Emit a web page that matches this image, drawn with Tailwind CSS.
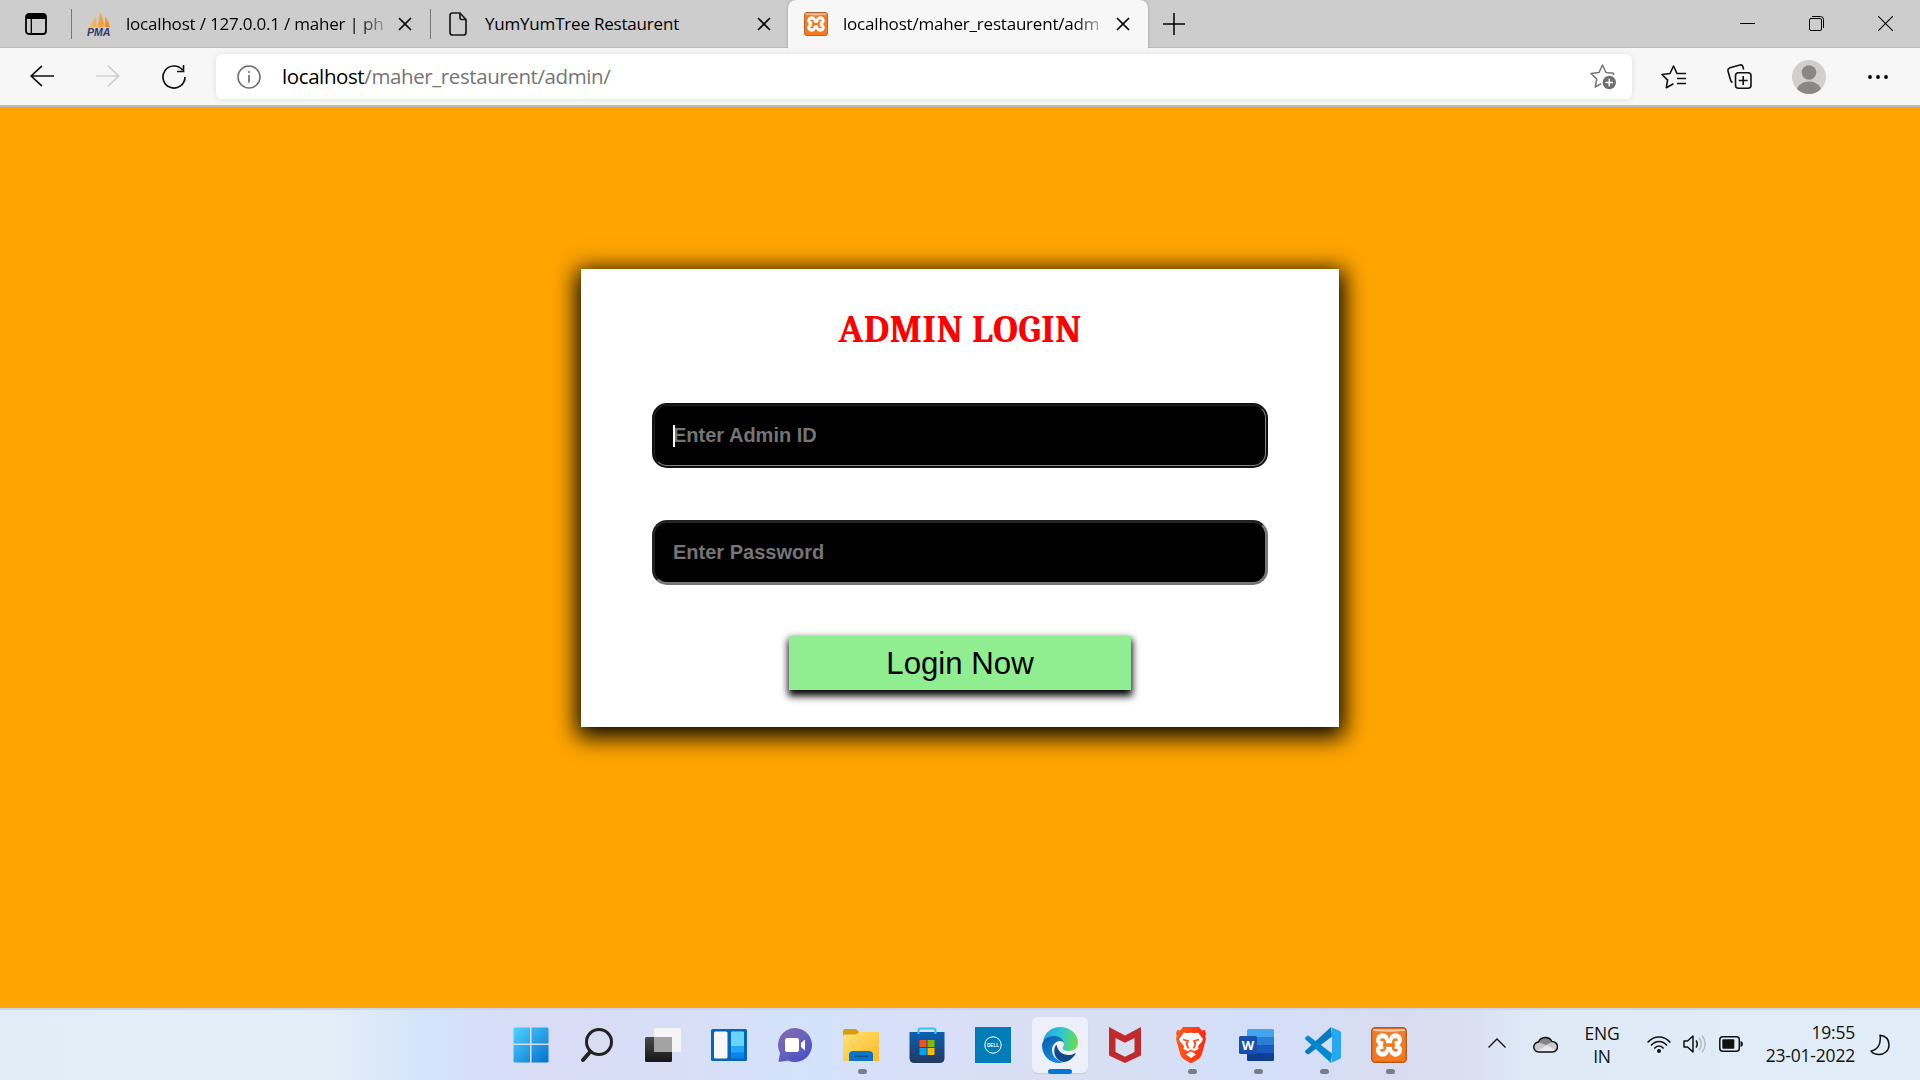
<!DOCTYPE html>
<html lang="en">
<head>
<meta charset="utf-8">
<title>Admin Login</title>
<script src="https://cdn.jsdelivr.net/npm/@tailwindcss/browser@4"></script>
</head>
<body class="w-[1920px] h-[1080px] overflow-hidden flex flex-col font-['Open_Sans',sans-serif] text-black">

<svg class="absolute w-0 h-0">
  <defs>
    <linearGradient id="xo" x1="0" y1="0" x2="0" y2="1"><stop offset="0" stop-color="#e8803c"/><stop offset=".3" stop-color="#f47a20"/><stop offset="1" stop-color="#f5791f"/></linearGradient>
    <symbol id="xampp" viewBox="0 0 36 36">
      <rect x=".7" y=".7" width="34.6" height="34.6" rx="3.5" fill="url(#xo)" stroke="#b55a1c" stroke-width="1.4"/>
      <path d="M2 2.2h32v1.600q-16 2-32 0z" fill="#f9c7a0"/>
      <g fill="#fff"><circle cx="11.500" cy="12.800" r="6.500"/><circle cx="24.500" cy="12.800" r="6.500"/><circle cx="11.500" cy="23.200" r="6.500"/><circle cx="24.500" cy="23.200" r="6.500"/><path d="M8 13h20v10H8z"/></g>
      <path d="M10.500 12.800q2.800-.8 3.200 1.700 .3 1.500-.5 3.500 .8 2 .5 3.500-.4 2.500-3.200 1.700M25.500 12.800q-2.800-.8-3.200 1.700-.3 1.500 .5 3.500-.8 2-.5 3.500 .4 2.500 3.200 1.700" fill="none" stroke="#f47a20" stroke-width="2.600" stroke-linecap="round"/>
      <path d="M13 16.200h10v3.600H13z" fill="#f47a20"/>
    </symbol>
    <symbol id="x" viewBox="0 0 14 14"><path d="M1 1l12 12M13 1L1 13" stroke="currentColor" stroke-width="1.700" fill="none"/></symbol>
  </defs>
</svg>

<!-- Tab strip -->
<header class="h-12 shrink-0 bg-[#cdcdcd] flex items-center border-b border-[#bdbdbd] text-[17px] tracking-[-0.2px] whitespace-nowrap">
  <div class="w-[71px] pl-[25px]">
    <svg class="w-[22px] h-[22px]" viewBox="0 0 22 22"><rect x="1" y="1" width="20" height="20" rx="3" fill="none" stroke="#000" stroke-width="1.800"/><path d="M1 6V4q0-3 3-3h14q3 0 3 3v2z"/><path d="M6.300 6v15" stroke="#000" stroke-width="1.300"/></svg>
  </div>
  <div class="w-[359px] h-[30px] border-l border-[#777] flex items-center pl-[15px]">
    <svg class="w-6 h-6 shrink-0" viewBox="0 0 24 24"><defs><linearGradient id="pm" x1="0" y1="0" x2="1" y2="0"><stop offset="0" stop-color="#fbc16c"/><stop offset="1" stop-color="#f88a10"/></linearGradient></defs><path d="M1 15.500Q7 10 8 4q2 6 1 11zM9.500 15Q13 8 12.500 0q5 7 4 15zM17.500 15Q19 9 18 4q4 6 5 11.500z" fill="url(#pm)"/><text x="0" y="23.500" font-family="Liberation Sans" font-size="10" font-weight="700" font-style="italic" fill="#333a6b" textLength="23.500" lengthAdjust="spacingAndGlyphs" letter-spacing="0">PMA</text></svg>
    <div class="ml-[15px] w-[263px] mask-r-from-[232px] mask-r-to-[266px]">localhost / 127.0.0.1 / maher | ph</div>
    <svg class="w-[14px] h-[14px] ml-[9px]"><use href="#x"/></svg>
  </div>
  <div class="w-[358px] h-[30px] border-l border-[#777] flex items-center pl-[18px]">
    <svg class="w-[18px] h-6" viewBox="0 0 18 24"><path d="M3.500 1h7.500l6 6.500V20.500q0 2.500-2.500 2.500h-11Q1 23 1 20.500v-17Q1 1 3.500 1zM11 1v5q0 1.500 1.500 1.500H17" fill="none" stroke="#1a1a1a" stroke-width="1.700"/></svg>
    <div class="ml-[18px] w-[272px]">YumYumTree Restaurent</div>
    <svg class="w-[14px] h-[14px]"><use href="#x"/></svg>
  </div>
  <div class="relative w-[360px] h-[49px] self-start bg-[#f7f7f7] rounded-t-lg shadow-[0_0_3px_rgba(0,0,0,0.25)] [clip-path:inset(-4px_-4px_0_-4px)] flex items-center pl-4 pb-[2px]">
    <svg class="w-6 h-6"><use href="#xampp"/></svg>
    <div class="ml-[15px] w-[260px] mask-r-from-[232px] mask-r-to-[266px]">localhost/maher_restaurent/adm</div>
    <svg class="w-[14px] h-[14px] ml-[13px]"><use href="#x"/></svg>
  </div>
  <svg class="w-[22px] h-[22px] ml-[15px]" viewBox="0 0 22 22"><path d="M11 0v22M0 11h22" stroke="#000" stroke-width="1.500"/></svg>
  <div class="ml-auto flex items-center gap-[54px] pr-[27px]">
    <svg class="w-[15px] h-[15px]"><path d="M0 7.500h15" stroke="#000"/></svg>
    <svg class="w-[15px] h-[15px]" viewBox="0 0 15 15" fill="none" stroke="#000"><rect x=".5" y="2.500" width="12" height="12" rx="1.500"/><path d="M3 .5h8.500q3 0 3 3V12"/></svg>
    <svg class="w-[15px] h-[15px]"><path d="M0 0l15 15M15 0L0 15" stroke="#000" stroke-width="1.100"/></svg>
  </div>
</header>

<!-- Toolbar -->
<nav class="h-[59px] shrink-0 bg-[#f7f7f7] border-b-2 border-[#bbb] flex items-center pl-[30px]">
  <svg class="w-6 h-[22px] -mt-[2px]" viewBox="0 0 24 22" fill="none" stroke="#111" stroke-width="1.700"><path d="M24 11H1M12 .8L1.200 11 12 21.200"/></svg>
  <svg class="w-6 h-[22px] ml-[42px] -mt-[2px]" viewBox="0 0 24 22" fill="none" stroke="#cfcfcf" stroke-width="1.700"><path d="M0 11h23M12 .8L22.800 11 12 21.200"/></svg>
  <svg class="w-6 h-6 ml-[42px]" viewBox="0 0 24 24" fill="none" stroke="#111" stroke-width="1.700"><path d="M23 12A11 11 0 1 1 20.500 5M21.500 0v6.500H15"/></svg>
  <div class="ml-[30px] w-[1416px] h-[45px] rounded-md bg-white shadow-[0_0_6px_rgba(0,0,0,0.1)] flex items-center pl-[21px] pr-[15px]">
    <svg class="w-6 h-6" viewBox="0 0 24 24" fill="none" stroke="#6b6b6b" stroke-width="1.500"><circle cx="12" cy="12" r="11"/><path d="M12 10v7.500" stroke-width="1.700"/><circle cx="12" cy="7" r="1" fill="#6b6b6b" stroke="none"/></svg>
    <div class="ml-[21px] text-[20.5px] tracking-[-0.4px] text-[#757575]"><span class="text-black">localhost</span>/maher_restaurent/admin/</div>
    <svg class="w-[27px] h-[26px] ml-auto" viewBox="0 0 27 26"><path d="M23.500 11v-1.800L16 8.500 12.500 1 9 8.500 1 9.500l5.800 5.600L5.200 23l6-3.300" fill="none" stroke="#777" stroke-width="1.500" stroke-linejoin="round"/><circle cx="19.300" cy="18.500" r="6.700" fill="#6f6f6f"/><path d="M19.300 14.700v7.600M15.500 18.500h7.600" stroke="#fff" stroke-width="1.500"/></svg>
  </div>
  <svg class="w-[25px] h-[24px] ml-[29px]" viewBox="0 0 25 24" fill="none" stroke="#111" stroke-width="1.600" stroke-linejoin="round"><path d="M25 8.500h-9L12.500 1 9 8.500 1 9.500l5.600 5.600L5.300 22.700l7.200-4M16 13.500h9M16 18.500h9"/></svg>
  <svg class="w-[25px] h-[25px] ml-[41px]" viewBox="0 0 25 25" fill="none" stroke="#111" stroke-width="1.600"><rect x="8.500" y="8.800" width="15.500" height="15.400" rx="3"/><path d="M16.200 12v9M11.700 16.500h9M5.500 18.500Q4 18 3.500 16L1 7q-.5-2.500 2-3.200L13 1q2.500-.5 3 2l.6 2.500"/></svg>
  <svg class="w-[34px] h-[34px] ml-[40px]" viewBox="0 0 34 34"><defs><clipPath id="av"><circle cx="17" cy="17" r="17"/></clipPath></defs><g clip-path="url(#av)"><rect width="34" height="34" fill="#d2d0ce"/><circle cx="17" cy="12.500" r="7.300" fill="#8a8886"/><ellipse cx="17" cy="32" rx="12.500" ry="10.500" fill="#8a8886"/></g></svg>
  <svg class="w-5 h-1 ml-[42px]" viewBox="0 0 20 4"><circle cx="2" cy="2" r="1.900"/><circle cx="10" cy="2" r="1.900"/><circle cx="18" cy="2" r="1.900"/></svg>
</nav>

<!-- Page -->
<main class="flex-1 bg-[#ffa500] flex justify-center items-start pt-[162px]">
  <form class="w-[758px] h-[458px] bg-white shadow-[0_5px_22px_4.5px_#000] flex flex-col items-center pt-[37px]">
    <h1 class="font-[Cambria,Caladea,serif] font-bold text-[38.5px] leading-[48px] tracking-[0.3px] text-[red]">ADMIN LOGIN</h1>
    <div class="relative mt-[49px] w-[616px] h-[65px] rounded-[15px] border-2 border-[#101010] bg-black">
      <input class="w-full h-full rounded-[13px] border border-t-[#222] border-l-[#222] border-r-[#858585] border-b-[#858585] bg-black pl-[18px] text-[20px] font-bold font-['Liberation_Sans',Arial,sans-serif] text-white placeholder:text-[#757575] outline-none" placeholder="Enter Admin ID">
      <span class="absolute left-[19px] top-[20px] w-[2px] h-[22px] bg-white"></span>
    </div>
    <input type="password" class="mt-[52px] w-[616px] h-[65px] rounded-[15px] border-[3px] border-t-[#222] border-l-[#222] border-r-[#767676] border-b-[#767676] bg-black pl-[18px] text-[20px] font-bold font-['Liberation_Sans',Arial,sans-serif] text-white placeholder:text-[#757575]" placeholder="Enter Password">
    <button type="button" class="mt-[51px] w-[342px] h-[54px] bg-[#90ee90] shadow-[0_4.5px_7.5px_1.5px_#000] text-[31.2px] leading-[53px] font-['Liberation_Sans',Arial,sans-serif]">Login Now</button>
  </form>
</main>

<!-- Taskbar -->
<footer class="h-[72px] shrink-0 border-t-2 border-[#cbd6e8] bg-[linear-gradient(90deg,#e1edf7_0,#e3eef8_330px,#d4e3fb_430px,#d8dcf5_530px,#d8dff7_700px,#d3e3fa_800px,#d8e0f8_900px,#d9dff2_1100px,#d3dffa_1250px,#d8dcf0_1400px,#dadff1_1470px,#dfeaf7_1530px,#e1edf9_1920px)] flex items-center">
  <div class="ml-[498px] flex h-full [&>div]:relative [&>div]:w-[66px] [&>div]:h-full [&>div]:flex [&>div]:items-center [&>div]:justify-center">
    <div><svg class="w-9 h-9" viewBox="0 0 36 36"><defs><linearGradient id="wn" x1="0" y1="0" x2="1" y2="1"><stop offset="0" stop-color="#4fd4ff"/><stop offset="1" stop-color="#0470cc"/></linearGradient></defs><path d="M2 .5h15v16H.5V2Q.5 .5 2 .5zM18.500 .5h15.500q1.500 0 1.500 1.500v14.500h-17zM.5 18H17v17.500H2Q.5 35.500 .5 34zM18.500 18h17v16q0 1.500-1.500 1.500H18.500z" fill="url(#wn)"/></svg></div>
    <div><svg class="w-9 h-9" viewBox="0 0 36 36" fill="none" stroke="#222"><circle cx="20" cy="15" r="12.500" stroke-width="3"/><path d="M11.500 24.500L4 33" stroke-width="4" stroke-linecap="round"/></svg></div>
    <div><svg class="w-9 h-9" viewBox="0 0 36 36"><defs><linearGradient id="tv" x1="0" y1="0" x2="0" y2="1"><stop offset="0" stop-color="#4a4a4a"/><stop offset="1" stop-color="#161616"/></linearGradient></defs><rect x="0" y="10" width="27" height="25" rx="1.500" fill="url(#tv)"/><rect x="9" y="1" width="27" height="24" rx="1.500" fill="#f5f5f5"/><path d="M9 10h18v15H10.500Q9 25 9 23.500z" fill="#a3a3a3"/></svg></div>
    <div><svg class="w-9 h-9" viewBox="0 0 36 36"><rect y="2" width="36" height="32" rx="1.500" fill="#0865b8"/><rect x="3" y="4.500" width="13.500" height="27" rx="1.500" fill="#f8f8f8"/><rect x="20" y="4.500" width="13" height="27" rx="1" fill="#0a84ea"/><path d="M20 19V5.500q0-1 1-1h11q1 0 1 1V19z" fill="#66d5ff"/><path d="M20 19h13v6.500H20z" fill="#1fa5fa"/></svg></div>
    <div><svg class="w-9 h-9" viewBox="0 0 36 36"><defs><linearGradient id="ch" x1="0" y1="0" x2=".7" y2="1"><stop offset="0" stop-color="#8d66a8"/><stop offset=".5" stop-color="#6a63bd"/><stop offset="1" stop-color="#4b50c4"/></linearGradient></defs><path d="M18 1a17 17 0 1 1-7 32.500Q5 35 1.500 34.500L3 26A17 17 0 0 1 18 1z" fill="url(#ch)"/><rect x="8" y="11" width="14" height="14" rx="2" fill="#fff"/><path d="M24 16l4-3.500v11L24 20z" fill="#fff"/></svg></div>
    <div><svg class="w-9 h-9" viewBox="0 0 36 36"><defs><linearGradient id="fo" x1="0" y1="0" x2="1" y2="1"><stop offset="0" stop-color="#ffe27a"/><stop offset="1" stop-color="#fcba20"/></linearGradient></defs><path d="M0 4q0-2 2-2h10q2 0 3 2l1 1h20v4H0z" fill="#dc9c0a"/><path d="M0 9q0-1.500 1.500-1.500H12q1.500 0 3-1.500 .8-1 2-1H36v29H0z" fill="url(#fo)"/><path d="M6 34V28q0-4 4-4h16q4 0 4 4v6z" fill="#0b73c8"/><path d="M11 29.300h14" stroke="#064b8a" stroke-width="1.300"/></svg><span class="absolute left-[30px] bottom-[6px] w-[9px] h-[5px] rounded-full bg-[#797d89]"></span></div>
    <div><svg class="w-9 h-9" viewBox="0 0 36 36"><defs><linearGradient id="st" x1="0" y1="0" x2="0" y2="1"><stop offset="0" stop-color="#0a61b4"/><stop offset="1" stop-color="#24385e"/></linearGradient></defs><path d="M.5 5h35v26q0 5-5 5h-25q-5 0-5-5z" fill="url(#st)"/><path d="M9.500 7V3q0-1.500 1.500-1.500h14q1.500 0 1.500 1.500v4" fill="none" stroke="#36c1f0" stroke-width="2"/><path d="M10.500 13h7v7h-7z" fill="#f25022"/><path d="M18.500 13h7v7h-7z" fill="#7fba00"/><path d="M10.500 21h7v7h-7z" fill="#00a4ef"/><path d="M18.500 21h7v7h-7z" fill="#ffb900"/></svg></div>
    <div><svg class="w-9 h-9" viewBox="0 0 36 36"><path d="M0 0h36v36H0z" fill="#007db8"/><circle cx="18" cy="18" r="8.200" fill="none" stroke="#fff"/><text x="12" y="20" textLength="12" lengthAdjust="spacingAndGlyphs" font-family="Liberation Sans" font-size="5.500" font-weight="700" fill="#fff">DELL</text></svg></div>
    <div><span class="absolute left-[6px] top-[7px] w-14 h-14 rounded-md bg-[#edf0fa] shadow-[0_1px_1px_#c5cbdd]"></span>
      <svg class="relative left-px w-9 h-9" viewBox="0 0 36 36"><defs><linearGradient id="e1" x1="0" y1=".3" x2="1" y2=".4"><stop offset="0" stop-color="#259fe4"/><stop offset=".5" stop-color="#2fc5d8"/><stop offset="1" stop-color="#6bdc4c"/></linearGradient><linearGradient id="e2" x1="0" y1="0" x2=".6" y2="1"><stop offset="0" stop-color="#0b5ca8"/><stop offset="1" stop-color="#118be0"/></linearGradient></defs>
      <path d="M1 14C3 5 10 0 18 0c10 0 18 7 18 15 0 6-4 9-9 9-4 0-6.500-1.500-6.500-3 0-1 1.500-1.500 1.500-4 0-3-4-6-9-6-5 0-9 1-12 3z" fill="url(#e1)"/>
      <path d="M0 18C1 12 6 9 12 9c6 0 10 4 10 8 0-2-2-3-4-3-4 0-8 4-8 9 0 6 5 11 11 12-1.500 .8-2 1-4 1C7 36 0 28 0 18z" fill="url(#e2)"/>
      <path d="M14.500 17.500C12 20 11 27 15 31.500c4 4.500 9 4 12 2 3-1.800 5.500-4.500 6.500-6.500 .3-.6-.3-1-1-.6-2 1-4 1.600-6 1.600-6 0-11-4-12-10.500z" fill="#114a8b"/></svg>
      <span class="absolute left-[22px] bottom-[6px] w-6 h-[5px] rounded-full bg-[#0078d7]"></span></div>
    <div><svg class="w-9 h-9" viewBox="0 0 36 36"><path d="M2 0l16 8.500L34 0v28.500L18 36 2 28.500zM8.500 11v14l9.500 4.700L27.500 25V11L18 15.700z" fill="#c12a2c" fill-rule="evenodd"/></svg></div>
    <div><svg class="w-9 h-9" viewBox="0 0 36 36"><defs><linearGradient id="br"><stop offset="0" stop-color="#ff5a1c"/><stop offset="1" stop-color="#ff2a0c"/></linearGradient></defs><path d="M10 0h16l3 3.500 3-.5 1 4-.8 1.500L33 12l-4.500 16q-.8 2.500-3 4L18 36.500 10.500 32q-2.200-1.500-3-4L3 12l.8-3.500L3 7l1-4 3 .5z" fill="url(#br)"/><path d="M11 5.500l4 .8 3-.8 3 .8 4-.8 5 6.500-1 2.500-4 4.500 .5 3-4 2-1.500 1.500 3 2L18 31l-5-3.500 3-2-1.500-1.500-4-2 .5-3-4-4.500L6 12z" fill="#fff"/><path d="M10 12.500l5 1.500-1.500 3 2 4.500M26 12.500l-5 1.500 1.500 3-2 4.500M15 25l3-1.500 3 1.500" stroke="#fb4a1c" stroke-width="1.800" fill="none"/></svg><span class="absolute left-[30px] bottom-[6px] w-[9px] h-[5px] rounded-full bg-[#797d89]"></span></div>
    <div><svg class="w-9 h-9" viewBox="0 0 36 36"><path d="M8 10V3.500Q8 2 9.500 2h24Q35 2 35 3.500V10z" fill="#41a5ee"/><path d="M8 10h27v8H8z" fill="#2b7cd3"/><path d="M8 18h27v8H8z" fill="#185abd"/><path d="M8 26h27v6.500q0 1.500-1.500 1.500h-24Q8 34 8 32.500z" fill="#103f91"/><rect y="9" width="18" height="18" rx="1.500" fill="#174fae"/><text x="2.800" y="22.500" textLength="12.500" lengthAdjust="spacingAndGlyphs" font-family="Open Sans" font-size="13" font-weight="700" fill="#fff">W</text></svg><span class="absolute left-[30px] bottom-[6px] w-[9px] h-[5px] rounded-full bg-[#797d89]"></span></div>
    <div><svg class="w-9 h-9" viewBox="0 0 36 36"><path d="M26 0l1 9.500L4 27q-1 .6-2 0L.5 25.500q-1-1 0-2z" fill="#0a78be"/><path d="M.5 12.500q-1-1 0-2L2 9q1-.8 2 0l23 17.500-1 9.500z" fill="#0489d0"/><path d="M26 0l8.700 4q1.300 .7 1.300 2v24q0 1.300-1.300 2L26 36q1-.5 1-2V2q0-1.500-1-2z" fill="#25a7f2"/></svg><span class="absolute left-[30px] bottom-[6px] w-[9px] h-[5px] rounded-full bg-[#797d89]"></span></div>
    <div><svg class="w-9 h-9"><use href="#xampp"/></svg><span class="absolute left-[30px] bottom-[6px] w-[9px] h-[5px] rounded-full bg-[#797d89]"></span></div>
  </div>

  <div class="ml-auto h-full flex items-center text-[17.5px] leading-[23px] text-[#111] tracking-[-0.2px]">
    <svg class="w-[18px] h-[10px] mb-1" viewBox="0 0 18 10"><path d="M.5 9.500L9 1l8.500 8.500" fill="none" stroke="#111" stroke-width="1.400"/></svg>
    <svg class="w-[25px] h-[17px] ml-[27px] mb-[2px]" viewBox="0 0 25 17"><defs><clipPath id="cl"><path d="M6 16A5 5 0 0 1 5.500 6 7.500 7.500 0 0 1 19 5.500 5.200 5.200 0 0 1 19.500 16z"/></clipPath></defs><g clip-path="url(#cl)"><path d="M0 0h25v17H0z" fill="#c9c9c9"/><path d="M5 6L12 0l9 5-8 4z" fill="#858585"/><path d="M3 16l11-7 10 6v2H3z" fill="#e9e9e9"/></g><path d="M6 16A5 5 0 0 1 5.500 6 7.500 7.500 0 0 1 19 5.500 5.200 5.200 0 0 1 19.500 16z" fill="none" stroke="#111" stroke-width="1.500"/></svg>
    <div class="ml-[26px] w-[36px] text-center">ENG<br>IN</div>
    <svg class="w-6 h-[17px] ml-[27px] mb-[2px]" viewBox="0 0 24 17" fill="none" stroke="#111" stroke-width="1.600"><path d="M.6 6.500Q5.500 1 12 1t11.400 5.500M4 9.500Q7.500 5.500 12 5.500t8 4M7.300 12.500Q9.500 10 12 10t4.700 2.500"/><circle cx="12" cy="15" r="2" fill="#111" stroke="none"/></svg>
    <svg class="w-6 h-5 ml-[12px] mb-[2px]" viewBox="0 0 24 20" fill="none" stroke="#111" stroke-width="1.500" stroke-linejoin="round"><path d="M1 7h3.500L10 2v16l-5.500-5H1zM13 6.500q2.500 3.500 0 7"/><path d="M16 4q4.500 6 0 12M19 1.500q6.500 8.500 0 17" stroke="#b4bcc6"/></svg>
    <svg class="w-6 h-4 ml-[12px] mb-[2px]" viewBox="0 0 24 16"><rect x=".8" y=".8" width="19.500" height="14.400" rx="3" fill="none" stroke="#111" stroke-width="1.500"/><rect x="3.300" y="3.300" width="12" height="9.400" rx="1" fill="#111"/><path d="M21.500 5q2.500 .5 2.500 3t-2.500 3z" fill="#111"/></svg>
    <div class="ml-[18px] w-[94px] text-right -mt-[2px]">19:55<br>23-01-2022</div>
    <svg class="w-5 h-[22px] ml-[15px] mr-[30px]" viewBox="0 0 20 22"><path d="M10 1.200C17 2 19 7 19 11c0 6-5 9.500-10 9.500-4 0-6.500-1.500-8-3.500 6-1 10.500-6 9-15.800z" fill="none" stroke="#111" stroke-width="1.500" stroke-linejoin="round"/></svg>
  </div>
</footer>
</body>
</html>
